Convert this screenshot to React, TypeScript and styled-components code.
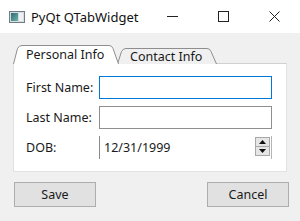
import styled, { createGlobalStyle } from 'styled-components';

const GlobalStyle = createGlobalStyle`
  html, body {
    margin: 0;
    padding: 0;
    background: #f0f0f0;
    width: 300px;
    height: 221px;
    overflow: hidden;
    font-family: 'Noto Sans', 'Open Sans', sans-serif;
    font-size: 12.5px;
    color: #1a1a1a;
  }
`;

const Window = styled.div`
  display: flex;
  flex-direction: column;
  width: 300px;
  height: 221px;
  background: #f0f0f0;
`;

const TitleBar = styled.div`
  display: flex;
  align-items: center;
  height: 33px;
  background: #ffffff;
  padding-left: 9px;
`;

const Title = styled.span`
  margin-left: 6px;
  font-size: 13px;
  color: #111;
  flex: 1;
`;

const CaptionButton = styled.div`
  width: 51px;
  height: 33px;
  display: flex;
  align-items: center;
  justify-content: center;
`;

const Body = styled.div`
  display: flex;
  flex-direction: column;
  padding: 13px 13px 0 13px;
`;

const TabRow = styled.div`
  display: flex;
  align-items: flex-end;
  height: 18px;
  position: relative;
  z-index: 1;
  margin-bottom: -1px;
`;

const Tab = styled.div<{ $active?: boolean; $width: number }>`
  position: relative;
  width: ${p => p.$width}px;
  height: ${p => (p.$active ? 19 : 16)}px;
  margin-left: ${p => (p.$active ? 0 : -2)}px;
  display: flex;
  align-items: center;
  padding-left: 13px;
  box-sizing: border-box;
  font-size: 12.5px;
  color: #1a1a1a;
  z-index: ${p => (p.$active ? 2 : 1)};

  svg {
    position: absolute;
    left: 0;
    top: 0;
    z-index: -1;
  }
`;

const Panel = styled.div`
  display: flex;
  flex-direction: column;
  gap: 7px;
  background: #ffffff;
  border: 1px solid #e2e2e2;
  border-top-color: #d0d0d0;
  padding: 12px;
  height: 109px;
  box-sizing: border-box;
`;

const FormRow = styled.div`
  display: flex;
  align-items: center;
  height: 23px;
`;

const Label = styled.span`
  width: 73px;
  font-size: 12.5px;
  color: #1a1a1a;
`;

const TextInput = styled.div<{ $focused?: boolean }>`
  width: 173px;
  height: 23px;
  box-sizing: border-box;
  border: 1px solid ${p => (p.$focused ? '#0078d7' : '#8f8f8f')};
  background: #fff;
`;

const DateEdit = styled.div`
  width: 173px;
  height: 23px;
  box-sizing: border-box;
  border-left: 1px solid #8a8a8a;
  border-right: 1px solid #b4b4b4;
  display: flex;
  align-items: center;
  justify-content: space-between;
  padding-left: 4px;
  padding-right: 1px;
  font-size: 12.5px;
  color: #1a1a1a;
`;

const SpinBox = styled.div`
  display: flex;
  flex-direction: column;
  width: 15px;
  height: 19px;
  margin-top: -2px;
`;

const SpinButton = styled.div`
  flex: 1;
  display: flex;
  align-items: center;
  justify-content: center;
  background: #e6e6e6;
  border: 1px solid #a8a8a8;
  & + & {
    border-top: none;
  }
`;

const ButtonRow = styled.div`
  display: flex;
  justify-content: space-between;
  padding: 10px 0 0 1px;
  margin-right: -2px;
`;

const PushButton = styled.div`
  width: 82px;
  height: 25px;
  box-sizing: border-box;
  display: flex;
  align-items: center;
  justify-content: center;
  background: #e1e1e1;
  border: 1px solid #adadad;
  font-size: 12.5px;
  color: #1a1a1a;
`;

const TabShape = ({ w, h, active }: { w: number; h: number; active?: boolean }) => (
  <svg width={w} height={h} viewBox={`0 0 ${w} ${h}`}>
    <path
      d={`M0.5 ${h} L4.5 3.5 Q6 0.5 9 0.5 L${w - 10} 0.5 Q${w - 7} 0.5 ${w - 6} 3.5 L${w - 0.5} ${h}`}
      fill={active ? '#ffffff' : '#f0f0f0'}
      stroke="#8e8e8e"
      strokeWidth="1"
    />
  </svg>
);

const AppIcon = () => (
  <svg width="16" height="12" viewBox="0 0 16 12">
    <defs>
      <linearGradient id="ig" x1="0" y1="0" x2="1" y2="1">
        <stop offset="0" stopColor="#2f6b74" />
        <stop offset="1" stopColor="#6fb3a8" />
      </linearGradient>
    </defs>
    <rect x="0.5" y="0.5" width="15" height="11" fill="#d8dde0" stroke="#6d7c86" />
    <rect x="2" y="2" width="7" height="8" fill="url(#ig)" />
    <rect x="10" y="2" width="4" height="8" fill="#eef1f3" />
  </svg>
);

export default function App() {
  return (
    <>
      <GlobalStyle />
      <Window>
        <TitleBar>
          <AppIcon />
          <Title>PyQt QTabWidget</Title>
          <CaptionButton>
            <svg width="11" height="11" viewBox="0 0 11 11">
              <line x1="0" y1="5.5" x2="11" y2="5.5" stroke="#222" strokeWidth="1" />
            </svg>
          </CaptionButton>
          <CaptionButton>
            <svg width="11" height="11" viewBox="0 0 11 11">
              <rect x="0.5" y="0.5" width="10" height="10" fill="none" stroke="#222" strokeWidth="1" />
            </svg>
          </CaptionButton>
          <CaptionButton>
            <svg width="11" height="11" viewBox="0 0 11 11">
              <path d="M0.5 0.5 L10.5 10.5 M10.5 0.5 L0.5 10.5" stroke="#222" strokeWidth="1" />
            </svg>
          </CaptionButton>
        </TitleBar>
        <Body>
          <TabRow>
            <Tab $active $width={106}>
              <TabShape w={106} h={19} active />
              Personal Info
            </Tab>
            <Tab $width={100}>
              <TabShape w={100} h={16} />
              Contact Info
            </Tab>
          </TabRow>
          <Panel>
            <FormRow>
              <Label>First Name:</Label>
              <TextInput $focused />
            </FormRow>
            <FormRow>
              <Label>Last Name:</Label>
              <TextInput />
            </FormRow>
            <FormRow>
              <Label>DOB:</Label>
              <DateEdit>
                12/31/1999
                <SpinBox>
                  <SpinButton>
                    <svg width="7" height="4" viewBox="0 0 7 4">
                      <path d="M0 4 L3.5 0 L7 4 Z" fill="#111" />
                    </svg>
                  </SpinButton>
                  <SpinButton>
                    <svg width="7" height="4" viewBox="0 0 7 4">
                      <path d="M0 0 L7 0 L3.5 4 Z" fill="#111" />
                    </svg>
                  </SpinButton>
                </SpinBox>
              </DateEdit>
            </FormRow>
          </Panel>
          <ButtonRow>
            <PushButton>Save</PushButton>
            <PushButton>Cancel</PushButton>
          </ButtonRow>
        </Body>
      </Window>
    </>
  );
}
